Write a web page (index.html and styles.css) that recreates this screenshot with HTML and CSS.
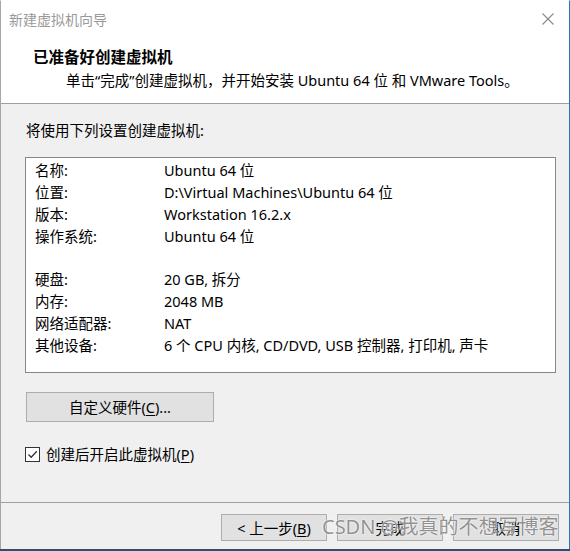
FILE: index.html
```html
<!DOCTYPE html>
<html lang="zh-CN">
<head>
<meta charset="utf-8">
<title>新建虚拟机向导</title>
<link rel="stylesheet" href="styles.css">
</head>
<body>
<div class="window">
  <div class="titlebar">
    <span class="title">新建虚拟机向导</span>
    <svg class="close" width="12" height="12" viewBox="0 0 12 12"><path d="M0.5 0.5L11.5 11.5M11.5 0.5L0.5 11.5" stroke="#8a8a8a" stroke-width="1.1" fill="none"/></svg>
  </div>
  <div class="header">
    <div class="h-title">已准备好创建虚拟机</div>
    <div class="h-sub">单击“完成”创建虚拟机，并开始安装 Ubuntu 64 位 和 VMware Tools。</div>
  </div>
  <div class="content">
    <div class="lead">将使用下列设置创建虚拟机:</div>
    <div class="listbox">
      <span class="k">名称:</span><span class="v">Ubuntu 64 位</span>
      <span class="k">位置:</span><span class="v">D:\Virtual Machines\Ubuntu 64 位</span>
      <span class="k">版本:</span><span class="v">Workstation 16.2.x</span>
      <span class="k">操作系统:</span><span class="v">Ubuntu 64 位</span>
      <span class="k">&nbsp;</span><span class="v">&nbsp;</span>
      <span class="k">硬盘:</span><span class="v">20 GB, 拆分</span>
      <span class="k">内存:</span><span class="v">2048 MB</span>
      <span class="k">网络适配器:</span><span class="v">NAT</span>
      <span class="k">其他设备:</span><span class="v">6 个 CPU 内核, CD/DVD, USB 控制器, 打印机, 声卡</span>
    </div>
    <div class="btn custom">自定义硬件(<u>C</u>)...</div>
    <div class="check">
      <span class="box"><svg width="11" height="11" viewBox="0 0 11 11"><path d="M1.5 5.5L4.2 8.2L9.8 2.2" stroke="#333" stroke-width="1.3" fill="none"/></svg></span>
      <span>创建后开启此虚拟机(<u>P</u>)</span>
    </div>
  </div>
  <div class="footer">
    <div class="btn">&lt; 上一步(<u>B</u>)</div>
    <div class="btn">完成</div>
    <div class="btn">取消</div>
    <div class="watermark">CSDN @我真的不想写博客</div>
  </div>
</div>
</body>
</html>
```
FILE: styles.css
```css
* { box-sizing: border-box; }
html, body { margin: 0; padding: 0; }
body {
  background: #2a4f73;
  width: 570px;
  height: 551px;
  overflow: hidden;
  font-family: "Noto Sans", "Noto Sans CJK SC", sans-serif;
  font-size: 14.5px;
  color: #000;
}
.window {
  width: 570px;
  height: 549px;
  display: flex;
  flex-direction: column;
  border-left: 1px solid #a6a6a6;
  border-right: 1px solid #2b78b4;
  border-top: 1px solid #ffffff;
  background: #f0f0f0;
  position: relative;
}
.titlebar {
  height: 35px;
  background: #fff;
  display: flex;
  align-items: flex-start;
  justify-content: space-between;
  padding: 9px 15px 0 8px;
}
.title {
  color: #999;
  font-size: 14px;
  line-height: 20px;
}
.close { margin-top: 3px; }
.header {
  height: 68px;
  background: #fff;
  border-bottom: 1px solid #a0a0a0;
  padding: 11px 0 0 32px;
}
.h-title {
  font-weight: bold;
  font-size: 15.5px;
  line-height: 20px;
}
.h-sub {
  margin-top: 3px;
  padding-left: 33px;
  line-height: 20px;
}
.content {
  flex: 1;
  padding: 16px 14px 0 24px;
  display: flex;
  flex-direction: column;
  align-items: flex-start;
}
.lead { line-height: 20px; padding-left: 1px; }
.listbox {
  margin-top: 17px;
  width: 531px;
  height: 216px;
  background: #fff;
  border: 1px solid #828790;
  padding: 2px 0 0 9px;
  display: grid;
  grid-template-columns: 129px 1fr;
  grid-auto-rows: 21.9px;
  align-content: start;
  line-height: 21.9px;
  white-space: nowrap;
}
.btn {
  background: #e1e1e1;
  border: 1px solid #adadad;
  display: flex;
  align-items: center;
  justify-content: center;
  line-height: 20px;
}
.btn u { text-underline-offset: 2px; }
.custom {
  margin: 19px 0 0 1px;
  width: 188px;
  height: 30px;
}
.check {
  margin-top: 22px;
  display: flex;
  align-items: center;
  gap: 6px;
  line-height: 20px;
}
.check u { text-underline-offset: 2px; }
.box {
  width: 15px;
  height: 15px;
  border: 1px solid #333;
  background: #fff;
  display: flex;
  align-items: center;
  justify-content: center;
}
.footer {
  height: 47px;
  border-top: 1px solid #a0a0a0;
  padding: 11px 10px 0 0;
  display: flex;
  justify-content: flex-end;
  align-items: flex-start;
  gap: 10px;
  position: relative;
}
.footer .btn {
  width: 106px;
  height: 27px;
}
.watermark {
  position: absolute;
  left: 321px;
  top: 11px;
  font-size: 20px;
  line-height: 26px;
  color: rgba(110, 110, 110, 0.75);
  text-shadow: 0 0 2px #fff, 0 0 1px #fff;
  white-space: nowrap;
  pointer-events: none;
}
```
